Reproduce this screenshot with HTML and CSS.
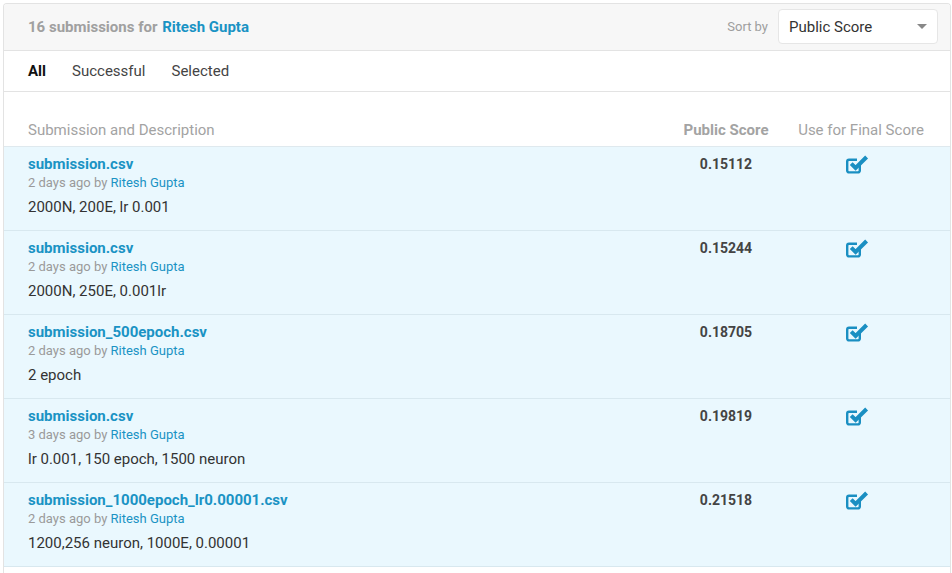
FILE: index.html
```html
<!DOCTYPE html>
<html>
<head>
<meta charset="utf-8">
<link rel="stylesheet" href="styles.css">
</head>
<body>
<div class="panel">
  <div class="head">
    <div class="head-title"><span class="count">16 submissions for</span> <a class="user">Ritesh Gupta</a></div>
    <div class="sort">
      <span class="sort-label">Sort by</span>
      <div class="select"><span>Public Score</span><span class="caret"></span></div>
    </div>
  </div>
  <div class="tabs">
    <span class="tab active">All</span>
    <span class="tab">Successful</span>
    <span class="tab">Selected</span>
  </div>
  <div class="thead">
    <div class="c-desc">Submission and Description</div>
    <div class="c-score strong">Public Score</div>
    <div class="c-final">Use for Final Score</div>
  </div>

  <div class="row">
    <div class="c-desc">
      <div class="fname">submission.csv</div>
      <div class="meta">2 days ago by <a>Ritesh Gupta</a></div>
      <div class="desc">2000N, 200E, lr 0.001</div>
    </div>
    <div class="c-score val">0.15112</div>
    <div class="c-final"><svg class="chk" viewBox="0 0 23 21"><path d="M13.8 11.5 V17.6 A1.8 1.8 0 0 1 12 19.4 H3 A1.8 1.8 0 0 1 1.2 17.6 V8.6 A1.8 1.8 0 0 1 3 6.8 H11" fill="none" stroke="currentColor" stroke-width="2.4"/><polyline points="5.2,10.6 9.6,15 20.6,4" fill="none" stroke="currentColor" stroke-width="4"/></svg></div>
  </div>
  <div class="row">
    <div class="c-desc">
      <div class="fname">submission.csv</div>
      <div class="meta">2 days ago by <a>Ritesh Gupta</a></div>
      <div class="desc">2000N, 250E, 0.001lr</div>
    </div>
    <div class="c-score val">0.15244</div>
    <div class="c-final"><svg class="chk" viewBox="0 0 23 21"><path d="M13.8 11.5 V17.6 A1.8 1.8 0 0 1 12 19.4 H3 A1.8 1.8 0 0 1 1.2 17.6 V8.6 A1.8 1.8 0 0 1 3 6.8 H11" fill="none" stroke="currentColor" stroke-width="2.4"/><polyline points="5.2,10.6 9.6,15 20.6,4" fill="none" stroke="currentColor" stroke-width="4"/></svg></div>
  </div>
  <div class="row">
    <div class="c-desc">
      <div class="fname">submission_500epoch.csv</div>
      <div class="meta">2 days ago by <a>Ritesh Gupta</a></div>
      <div class="desc">2 epoch</div>
    </div>
    <div class="c-score val">0.18705</div>
    <div class="c-final"><svg class="chk" viewBox="0 0 23 21"><path d="M13.8 11.5 V17.6 A1.8 1.8 0 0 1 12 19.4 H3 A1.8 1.8 0 0 1 1.2 17.6 V8.6 A1.8 1.8 0 0 1 3 6.8 H11" fill="none" stroke="currentColor" stroke-width="2.4"/><polyline points="5.2,10.6 9.6,15 20.6,4" fill="none" stroke="currentColor" stroke-width="4"/></svg></div>
  </div>
  <div class="row">
    <div class="c-desc">
      <div class="fname">submission.csv</div>
      <div class="meta">3 days ago by <a>Ritesh Gupta</a></div>
      <div class="desc">lr 0.001, 150 epoch, 1500 neuron</div>
    </div>
    <div class="c-score val">0.19819</div>
    <div class="c-final"><svg class="chk" viewBox="0 0 23 21"><path d="M13.8 11.5 V17.6 A1.8 1.8 0 0 1 12 19.4 H3 A1.8 1.8 0 0 1 1.2 17.6 V8.6 A1.8 1.8 0 0 1 3 6.8 H11" fill="none" stroke="currentColor" stroke-width="2.4"/><polyline points="5.2,10.6 9.6,15 20.6,4" fill="none" stroke="currentColor" stroke-width="4"/></svg></div>
  </div>
  <div class="row">
    <div class="c-desc">
      <div class="fname">submission_1000epoch_lr0.00001.csv</div>
      <div class="meta">2 days ago by <a>Ritesh Gupta</a></div>
      <div class="desc">1200,256 neuron, 1000E, 0.00001</div>
    </div>
    <div class="c-score val">0.21518</div>
    <div class="c-final"><svg class="chk" viewBox="0 0 23 21"><path d="M13.8 11.5 V17.6 A1.8 1.8 0 0 1 12 19.4 H3 A1.8 1.8 0 0 1 1.2 17.6 V8.6 A1.8 1.8 0 0 1 3 6.8 H11" fill="none" stroke="currentColor" stroke-width="2.4"/><polyline points="5.2,10.6 9.6,15 20.6,4" fill="none" stroke="currentColor" stroke-width="4"/></svg></div>
  </div>
  <div class="tail"></div>
</div>
</body>
</html>
```

FILE: styles.css
```css
* { box-sizing: border-box; }
html, body { margin: 0; padding: 0; background: #fff; }
body { font-family: Roboto, "Liberation Sans", sans-serif; color: #333; }
a { color: #1a93c4; text-decoration: none; }

.panel {
  margin: 3px 0 0 3px;
  width: 948px;
  border: 1px solid #e3e3e3;
  border-bottom: none;
  border-radius: 4px 4px 0 0;
  overflow: hidden;
}
.head {
  height: 47px;
  background: #f7f7f7;
  border-bottom: 1px solid #e3e3e3;
  display: flex;
  align-items: center;
  justify-content: space-between;
  padding: 0 12px 1px 24px;
}
.head-title { font-size: 15px; font-weight: 700; }
.count { color: #a0a0a0; }
.user { color: #1a93c4; font-size: 15px; margin-left: 1px; }
.sort { display: flex; align-items: center; gap: 10px; }
.sort-label { color: #9e9e9e; font-size: 13px; }
.select {
  width: 160px;
  height: 35px;
  background: #fff;
  border: 1px solid #e6e6e6;
  border-radius: 4px;
  display: flex;
  align-items: center;
  justify-content: space-between;
  padding: 0 10px 0 10px;
  font-size: 15px;
  color: #333;
}
.caret {
  width: 0; height: 0;
  border-left: 5px solid transparent;
  border-right: 5px solid transparent;
  border-top: 5px solid #888;
}
.tabs {
  height: 41px;
  border-bottom: 1px solid #e3e3e3;
  display: flex;
  align-items: center;
  padding-left: 24px;
  padding-bottom: 1px;
  gap: 26px;
  font-size: 15px;
}
.tab { color: #444; }
.tab.active { color: #111; font-weight: 700; }

.thead, .row { display: flex; padding-left: 24px; padding-right: 14px; }
.thead {
  padding-top: 28px;
  height: 55px;
  border-bottom: 1px solid #dfe9ee;
  font-size: 15px;
  color: #a3a3a3;
  line-height: 20px;
}
.c-desc { flex: 1; }
.c-score { width: 120px; text-align: center; }
.c-final { width: 150px; text-align: center; }
.strong { font-weight: 700; }

.row {
  height: 84px;
  background: #eaf8fe;
  border-bottom: 1px solid #d8e8ef;
  padding-top: 7px;
}
.fname { font-size: 15px; font-weight: 700; color: #1a93c4; line-height: 20px; }
.meta { font-size: 13px; color: #9a9a9a; line-height: 16px; margin-top: 1px; }
.desc { font-size: 15px; color: #333; line-height: 20px; margin-top: 6px; }
.val { font-size: 14px; font-weight: 700; color: #444; line-height: 20px; }
.chk { width: 23px; height: 21px; color: #1a8fc2; display: block; margin: -1px 0 0 60px; }
.tail { height: 10px; }
```
